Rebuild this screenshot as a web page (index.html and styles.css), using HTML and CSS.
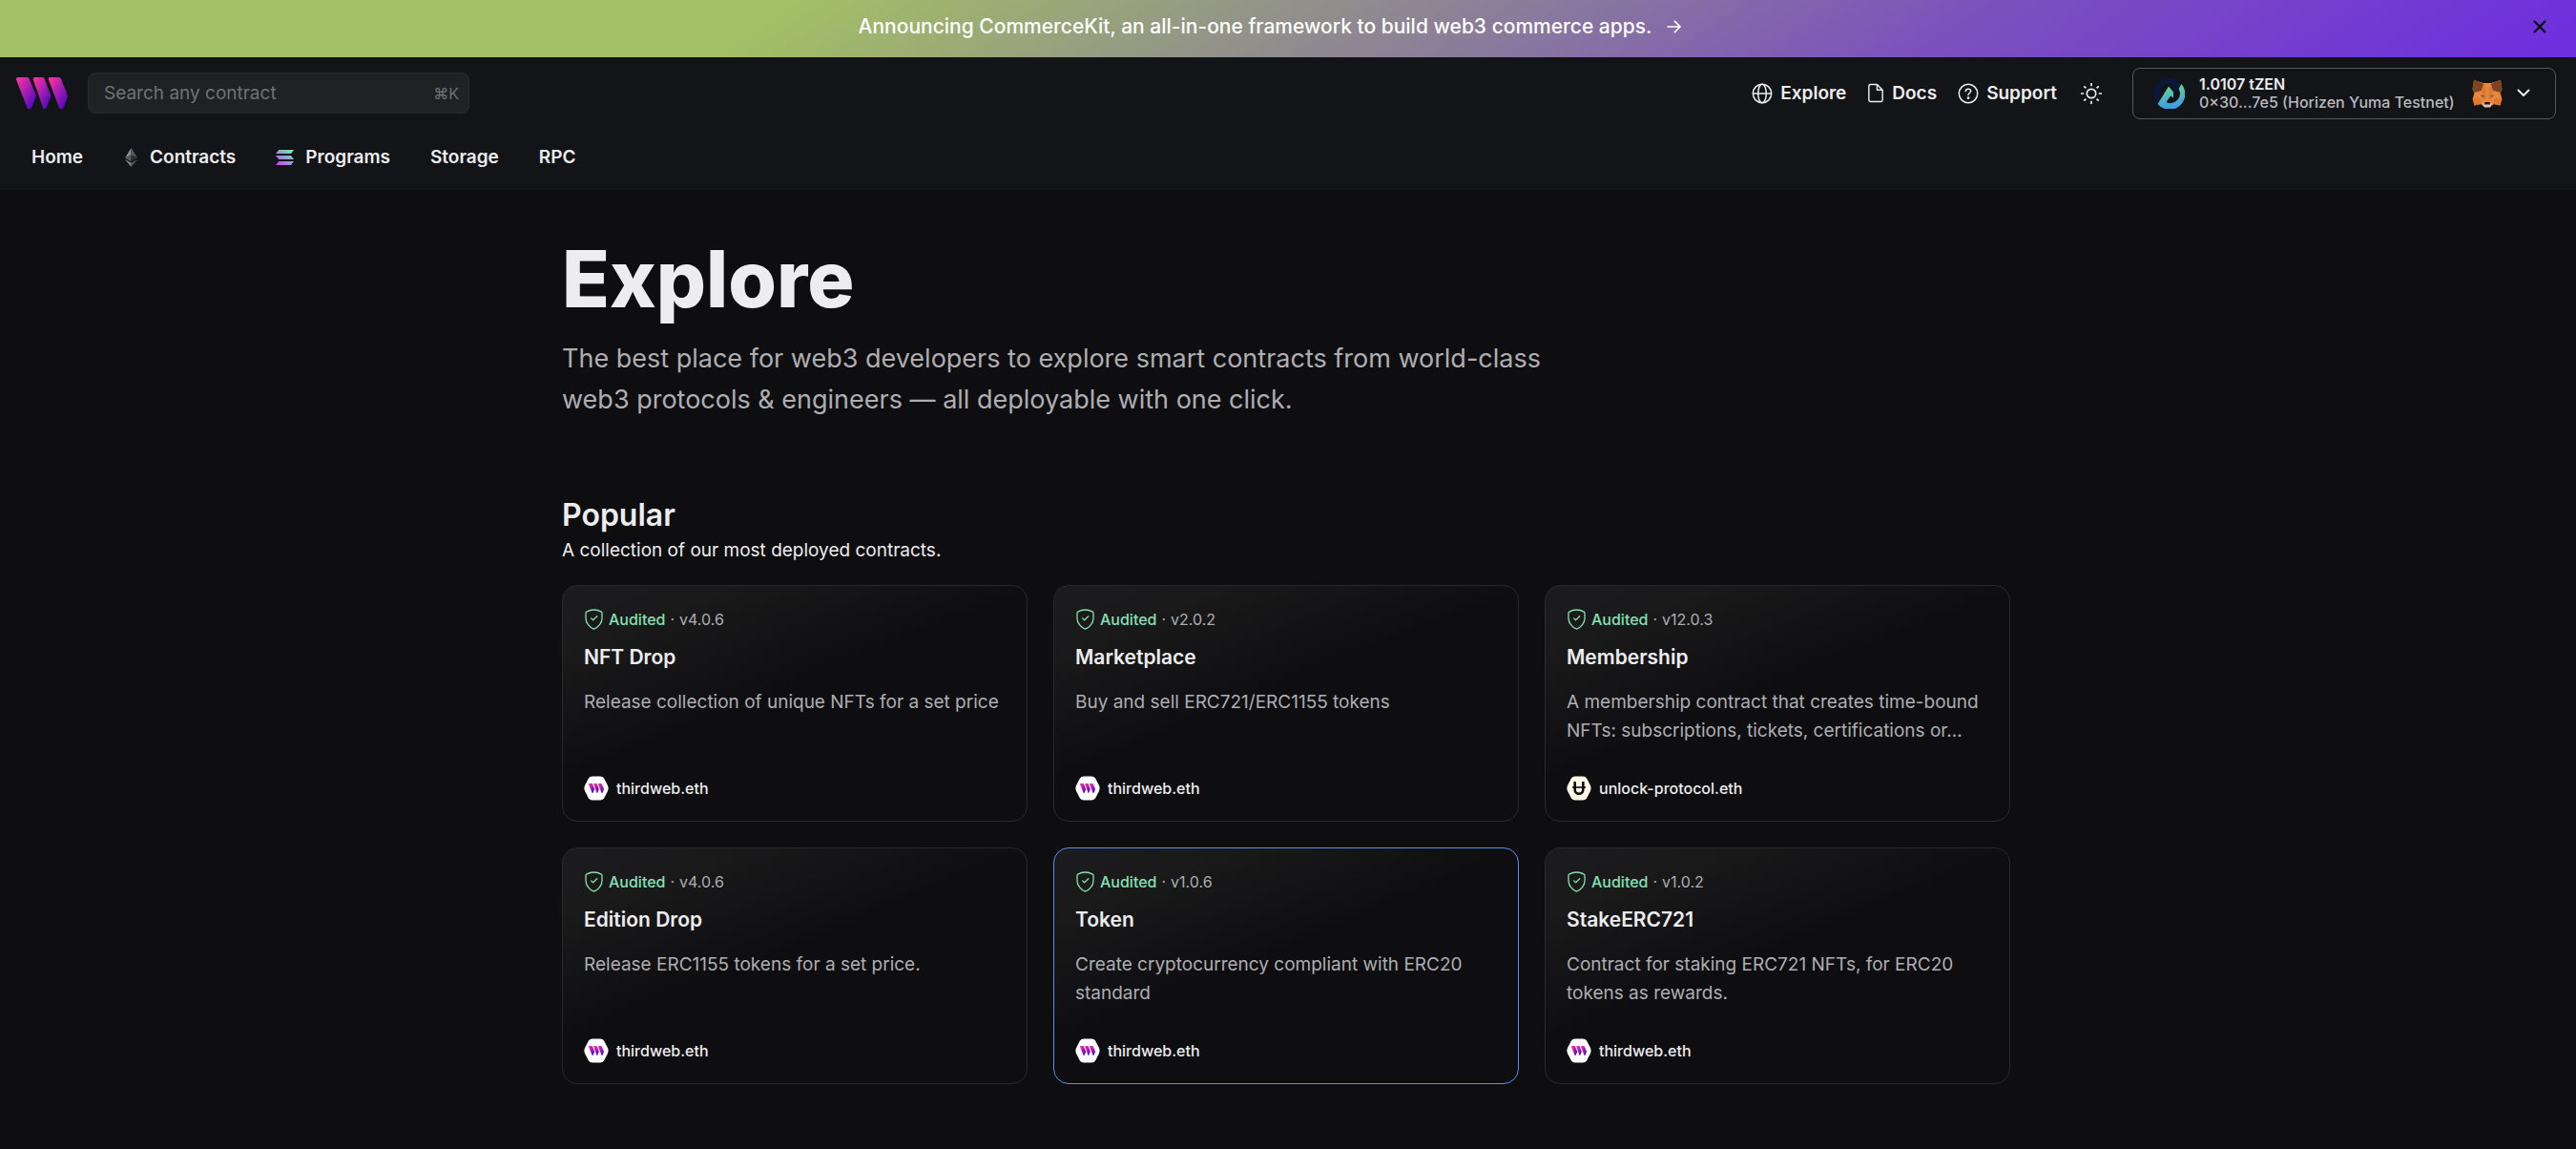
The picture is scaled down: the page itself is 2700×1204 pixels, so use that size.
FILE: index.html
```html
<!DOCTYPE html>
<html lang="en">
<head>
<meta charset="utf-8">
<meta name="viewport" content="width=device-width, initial-scale=1">
<title>Explore | thirdweb</title>
<link rel="stylesheet" href="styles.css">
</head>
<body>
<svg class="defs" aria-hidden="true">
  <defs>
    <linearGradient id="brand" x1="0" y1="0" x2="1" y2="1">
      <stop offset="0.1" stop-color="#f032a0"/>
      <stop offset="0.85" stop-color="#5a0bc0"/>
    </linearGradient>
    <linearGradient id="sol" x1="0" y1="1" x2="1" y2="0">
      <stop offset="0.1" stop-color="#c44cf0"/>
      <stop offset="0.9" stop-color="#6fe8b8"/>
    </linearGradient>
    <linearGradient id="zen" x1="0.4" y1="0" x2="0.6" y2="1">
      <stop offset="0.1" stop-color="#5fd39a"/>
      <stop offset="0.9" stop-color="#3f9be6"/>
    </linearGradient>
    <symbol id="mark" viewBox="0 0 54 33">
      <path fill="url(#brand)" d="M1.500 0H12Q13 0 13.400 1L20.500 18Q21 20 20.300 21.500L16 32Q15.500 33 14.500 33H13Q12 33 11.600 32L.2 3Q-.5 0 1.500 0Z"/>
      <path fill="url(#brand)" d="M19.500 0H28Q29 0 29.400 1L36 18Q36.500 20 35.800 21.500L31.500 32Q31 33 30 33H29.500Q28.500 33 28.100 32L18 3Q17.300 0 19.500 0Z"/>
      <path fill="url(#brand)" d="M35 0H45Q46 0 46.500 1L53.500 18Q54.300 20 53.500 21.500L49.500 32Q49 33 48 33H46.500Q45.500 33 45.100 32L34 3Q33.200 0 35 0Z"/>
    </symbol>
    <symbol id="shield" viewBox="0 0 19 22">
      <g fill="none" stroke="currentColor" stroke-width="1.300" stroke-linecap="round" stroke-linejoin="round">
        <path d="M9.500 1C11.800 1 15 1.800 17.300 3.100Q18 3.500 18 4.500V10C18 14.500 14.200 19.500 9.500 21.200C4.800 19.500 1 14.500 1 10V4.500Q1 3.500 1.700 3.100C4 1.800 7.200 1 9.500 1Z"/>
        <path d="M6.600 9.900L8.600 11.800L12.800 7.800"/>
      </g>
    </symbol>
    <symbol id="hexmark" viewBox="0 0 26 26">
      <path fill="#fff" d="M9 .5H17Q19.800.5 21.200 2.700L24.800 9.800Q26.400 13 24.800 16.200L21.200 23.300Q19.800 25.500 17 25.500H9Q6.200 25.500 4.800 23.300L1.200 16.200Q-.4 13 1.200 9.800L4.800 2.700Q6.200.5 9 .5Z"/>
      <use href="#mark" x="5" y="8" width="16" height="10"/>
    </symbol>
    <symbol id="unlock" viewBox="0 0 26 26">
      <path fill="#fff7e8" d="M9 .5H17Q19.800.5 21.200 2.700L24.800 9.800Q26.400 13 24.800 16.200L21.200 23.300Q19.800 25.500 17 25.500H9Q6.200 25.500 4.800 23.300L1.200 16.200Q-.4 13 1.200 9.800L4.800 2.700Q6.200.5 9 .5Z"/>
      <path fill="none" stroke="#0b0b0c" stroke-width="2.600" d="M8.700 6V14.500A4.300 4.300 0 0 0 17.300 14.500V6"/>
      <path stroke="#0b0b0c" stroke-width="1.600" d="M6 12H20"/>
    </symbol>
  </defs>
</svg>

<aside class="banner">
  <a class="banner-link" href="#">
    <span>Announcing CommerceKit, an all-in-one framework to build web3 commerce apps.</span>
    <svg class="i-arrow" viewBox="0 0 16 16" fill="none" stroke="currentColor" stroke-width="1.700" stroke-linecap="round" stroke-linejoin="round"><path d="M1 8H15M9 2L15 8L9 14"/></svg>
  </a>
  <button class="banner-close" type="button" aria-label="Close announcement">
    <svg class="i-close" viewBox="0 0 14 14" stroke="currentColor" stroke-width="2" stroke-linecap="round"><path d="M1.500 1.500L12.500 12.500M12.500 1.500L1.500 12.500"/></svg>
  </button>
</aside>

<header class="header">
  <div class="topbar">
    <a class="logo" href="#" aria-label="thirdweb"><svg class="i-logo"><use href="#mark"/></svg></a>
    <label class="search">
      <input type="search" placeholder="Search any contract" aria-label="Search any contract">
      <kbd>⌘K</kbd>
    </label>
    <nav class="links" aria-label="Resources">
      <a href="#"><svg class="i-link" viewBox="0 0 22 22" fill="none" stroke="currentColor" stroke-width="1.500"><circle cx="11" cy="11" r="9.700"/><ellipse cx="11" cy="11" rx="4.300" ry="9.700"/><path d="M1.300 11H20.700"/></svg>Explore</a>
      <a href="#"><svg class="i-doc" viewBox="0 0 18 22" fill="none" stroke="currentColor" stroke-width="1.500" stroke-linejoin="round"><path d="M3 1.500H10.500L16.500 7.500V18.700Q16.500 20.500 14.700 20.500H3.300Q1.500 20.500 1.500 18.700V3.300Q1.500 1.500 3.300 1.500M10.500 1.500V7.500H16.500"/></svg>Docs</a>
      <a href="#"><svg class="i-link" viewBox="0 0 22 22" fill="none" stroke="currentColor" stroke-width="1.500" stroke-linecap="round"><circle cx="11" cy="11" r="9.700"/><path d="M8.200 8.600Q8.400 6.200 11 6.200Q13.600 6.200 13.700 8.400C13.700 10.400 11 10.600 11 12.600"/><circle cx="11" cy="15.600" r=".7" fill="currentColor"/></svg>Support</a>
    </nav>
    <button class="theme" type="button" aria-label="Toggle theme">
      <svg class="i-link" viewBox="0 0 22 22" fill="none" stroke="currentColor" stroke-width="1.700"><circle cx="11" cy="11" r="4.700"/><path d="M11 0V3.200M11 18.800V22M0 11H3.200M18.800 11H22M3.300 3.300L5.400 5.400M16.600 16.600L18.700 18.700M3.300 18.700L5.400 16.600M16.600 5.400L18.700 3.300"/></svg>
    </button>
    <button class="wallet" type="button">
      <svg class="i-chain" viewBox="0 0 32 32">
        <path fill="none" stroke="#0a1840" stroke-width="5.500" d="M4.500 22.500A13.200 13.200 0 0 1 25 6.500L20.500 12"/>
        <path fill="url(#zen)" d="M29 6A16 16 0 0 1 4 27L15.500 8.500L20.500 14.500V20.500L17.500 18.500L13 25A10 10 0 0 0 26 11Z"/>
      </svg>
      <span class="wallet-text"><b>1.0107 tZEN</b><span>0×30...7e5 (Horizen Yuma Testnet)</span></span>
      <svg class="i-fox" viewBox="0 0 32 30">
        <path fill="#e8873a" d="M2 1L12 4H20L30 1L31.500 11L29.500 14L31.500 21L29.500 27.500L23 26L19 29H13L9 26L2.500 27.500L.5 21L2.500 14L.5 11Z"/>
        <path fill="#7c4423" d="M2 .5L12.500 5L10 12L1.500 14L.5 10ZM30 .5L19.500 5L22 12L30.500 14L31.500 10Z"/>
        <path fill="#d97a30" d="M1 20.500L9 20L9.500 26L2.500 27.500ZM31 20.500L23 20L22.500 26L29.500 27.500ZM12 5L10 12L12 21H14.500V9ZM20 5L22 12L20 21H17.500V9Z"/>
        <path fill="#5a5f66" d="M8.500 17L12 16.500L12.500 19.500ZM23.500 17L20 16.500L19.500 19.500Z"/>
        <path fill="#d9c6b4" d="M10.500 24.500L13 26H19L21.500 24.500L19 29.500H13Z"/>
        <path fill="#16181b" d="M13.500 24H18.500L19 26.500H13Z"/>
      </svg>
      <svg class="i-chev" viewBox="0 0 14 9" fill="none" stroke="currentColor" stroke-width="2" stroke-linecap="round" stroke-linejoin="round"><path d="M1.500 1.500L7 7L12.500 1.500"/></svg>
    </button>
  </div>
  <nav class="tabs" aria-label="Main">
    <a href="#">Home</a>
    <a href="#"><svg class="i-eth" viewBox="0 0 13 20"><path fill="#8a8a8a" d="M6.500 0V7.500L0 10.500Z"/><path fill="#5a5a5a" d="M6.500 0V7.500L13 10.500Z"/><path fill="#5c5c5c" d="M0 10.500L6.500 7.500V14.300Z"/><path fill="#2c2c2c" d="M13 10.500L6.500 7.500V14.300Z"/><path fill="#8a8a8a" d="M0 12L6.500 15.700V20Z"/><path fill="#555" d="M13 12L6.500 15.700V20Z"/></svg>Contracts</a>
    <a href="#"><svg class="i-sol" viewBox="0 0 19 16" fill="url(#sol)"><path d="M3.300 0H19L16 4.100H0ZM0 5.900H16L19 10H3.300ZM3.300 11.900H19L16 16H0Z"/></svg>Programs</a>
    <a href="#">Storage</a>
    <a href="#">RPC</a>
  </nav>
</header>

<main class="page">
  <h1>Explore</h1>
  <p class="lead">The best place for web3 developers to explore smart contracts from world-class web3 protocols &amp; engineers — all deployable with one click.</p>

  <section class="group">
    <h2>Popular</h2>
    <p class="group-note">A collection of our most deployed contracts.</p>
    <div class="grid">
      <article class="card">
        <div class="meta"><svg class="i-shield"><use href="#shield"/></svg><span class="audited">Audited</span><span>·</span><span>v4.0.6</span></div>
        <h3><a href="#">NFT Drop</a></h3>
        <p class="desc">Release collection of unique NFTs for a set price</p>
        <a class="author" href="#"><svg class="i-avatar"><use href="#hexmark"/></svg>thirdweb.eth</a>
      </article>
      <article class="card">
        <div class="meta"><svg class="i-shield"><use href="#shield"/></svg><span class="audited">Audited</span><span>·</span><span>v2.0.2</span></div>
        <h3><a href="#">Marketplace</a></h3>
        <p class="desc">Buy and sell ERC721/ERC1155 tokens</p>
        <a class="author" href="#"><svg class="i-avatar"><use href="#hexmark"/></svg>thirdweb.eth</a>
      </article>
      <article class="card">
        <div class="meta"><svg class="i-shield"><use href="#shield"/></svg><span class="audited">Audited</span><span>·</span><span>v12.0.3</span></div>
        <h3><a href="#">Membership</a></h3>
        <p class="desc">A membership contract that creates time-bound NFTs: subscriptions, tickets, certifications or...</p>
        <a class="author" href="#"><svg class="i-avatar"><use href="#unlock"/></svg>unlock-protocol.eth</a>
      </article>
      <article class="card">
        <div class="meta"><svg class="i-shield"><use href="#shield"/></svg><span class="audited">Audited</span><span>·</span><span>v4.0.6</span></div>
        <h3><a href="#">Edition Drop</a></h3>
        <p class="desc">Release ERC1155 tokens for a set price.</p>
        <a class="author" href="#"><svg class="i-avatar"><use href="#hexmark"/></svg>thirdweb.eth</a>
      </article>
      <article class="card active">
        <div class="meta"><svg class="i-shield"><use href="#shield"/></svg><span class="audited">Audited</span><span>·</span><span>v1.0.6</span></div>
        <h3><a href="#">Token</a></h3>
        <p class="desc">Create cryptocurrency compliant with ERC20 standard</p>
        <a class="author" href="#"><svg class="i-avatar"><use href="#hexmark"/></svg>thirdweb.eth</a>
      </article>
      <article class="card">
        <div class="meta"><svg class="i-shield"><use href="#shield"/></svg><span class="audited">Audited</span><span>·</span><span>v1.0.2</span></div>
        <h3><a href="#">StakeERC721</a></h3>
        <p class="desc">Contract for staking ERC721 NFTs, for ERC20 tokens as rewards.</p>
        <a class="author" href="#"><svg class="i-avatar"><use href="#hexmark"/></svg>thirdweb.eth</a>
      </article>
    </div>
  </section>
</main>
</body>
</html>
```
FILE: styles.css
```css
*, *::before, *::after { box-sizing: border-box; }

body {
  margin: 0;
  background: #0e0e10;
  color: #ededef;
  font-family: Inter, "Noto Sans", sans-serif;
  font-size: 19px;
  line-height: 30px;
}

h1, h2, h3, p { margin: 0; }
a { color: inherit; text-decoration: none; }
button { font: inherit; color: inherit; background: none; border: 0; padding: 0; cursor: pointer; }
svg { display: block; flex: none; }
.defs { position: absolute; width: 0; height: 0; }

/* Announcement */
.banner {
  display: flex;
  align-items: center;
  gap: 22px;
  height: 60px;
  padding: 0 30px 4px;
  background: linear-gradient(147deg, #a3c065 30%, #8f8a90 52%, #7c51bd 75%, #6d2ddf 100%);
}
.banner-link {
  flex: 1;
  display: flex;
  align-items: center;
  justify-content: center;
  gap: 16px;
  color: #fff;
  font-size: 21px;
  font-weight: 500;
}
.banner-close { display: grid; place-items: center; width: 16px; height: 32px; color: #000; }
.i-arrow { width: 15px; height: 16px; }
.i-close { width: 14px; height: 14px; }

/* Header */
.header { background: #131418; }
.topbar { display: flex; align-items: center; height: 75px; padding: 0 21px 0 17px; }
.i-logo { width: 54px; height: 33px; }
.search {
  display: flex;
  align-items: center;
  width: 400px;
  height: 43px;
  margin-left: 21px;
  padding: 0 10px 0 16px;
  border: 1px solid #2a2b2f;
  border-radius: 8px;
  background: #202124;
}
.search input {
  flex: 1;
  min-width: 0;
  padding: 0;
  border: 0;
  outline: 0;
  background: none;
  color: #ededef;
  font: inherit;
  appearance: none;
}
.search input::placeholder { color: #717276; opacity: 1; }
.search kbd { color: #717276; font-family: inherit; font-size: 16px; }

.links { display: flex; gap: 22px; margin-left: auto; font-weight: 600; }
.links a { display: flex; align-items: center; gap: 8px; }
.i-link { width: 22px; height: 22px; }
.i-doc { width: 18px; height: 21px; }
.theme { margin: 0 32px 0 25px; }

.wallet {
  display: flex;
  align-items: center;
  width: 444px;
  height: 54px;
  padding: 0 26px 0 21px;
  border: 1px solid #56575c;
  border-radius: 8px;
  text-align: left;
}
.wallet-text { display: flex; flex-direction: column; flex: 1; margin-left: 15px; font-size: 16px; line-height: 19px; font-weight: 500; color: #b9b9bf; }
.wallet-text b { font-weight: 600; color: #ededef; }
.i-chain { width: 33px; height: 32px; }
.i-fox { width: 32px; height: 30px; margin-right: 15px; }
.i-chev { width: 14px; height: 9px; }

.tabs { display: flex; gap: 42px; padding: 14px 33px 18px; font-weight: 600; line-height: 32px; }
.tabs a { display: flex; align-items: center; }
.i-eth { width: 13px; height: 20px; margin: 0 13px 0 2px; }
.i-sol { width: 19px; height: 16px; margin-right: 12px; }

/* Page */
.page { max-width: 1564px; margin: 0 auto; padding: 46px 25px 64px 21px; }
h1 { font-size: 82px; line-height: 96px; font-weight: 800; }
.lead { max-width: 1030px; margin-top: 13px; font-size: 27px; line-height: 43px; color: #aeaeb2; }
.group { margin-top: 80px; }
h2 { font-size: 32px; line-height: 40px; font-weight: 600; }
.group-note { margin-top: 2px; }

.grid { display: grid; grid-template-columns: repeat(3, 1fr); gap: 27px; margin-top: 21px; }
.card {
  display: flex;
  flex-direction: column;
  min-height: 248px;
  padding: 21px 22px;
  border: 1px solid #29292d;
  border-radius: 16px;
  background: linear-gradient(158deg, #1c1c1e 0%, #19191a 18%, #0e0e10 46%);
}
.card.active { border-color: #5a8df0; }
.meta { display: flex; align-items: center; gap: 5px; height: 28px; font-size: 16px; color: #aeaeb2; }
.audited { font-weight: 500; color: #85e0b4; }
.i-shield { width: 21px; height: 22px; color: #85e0b4; }
h3 { margin-top: 10px; font-size: 21px; line-height: 32px; font-weight: 600; }
.desc { margin: 16px 0 0; color: #aeaeb2; }
.author { display: flex; align-items: center; gap: 8px; margin-top: auto; font-size: 16px; line-height: 26px; font-weight: 500; }
.i-avatar { width: 26px; height: 26px; }
```
